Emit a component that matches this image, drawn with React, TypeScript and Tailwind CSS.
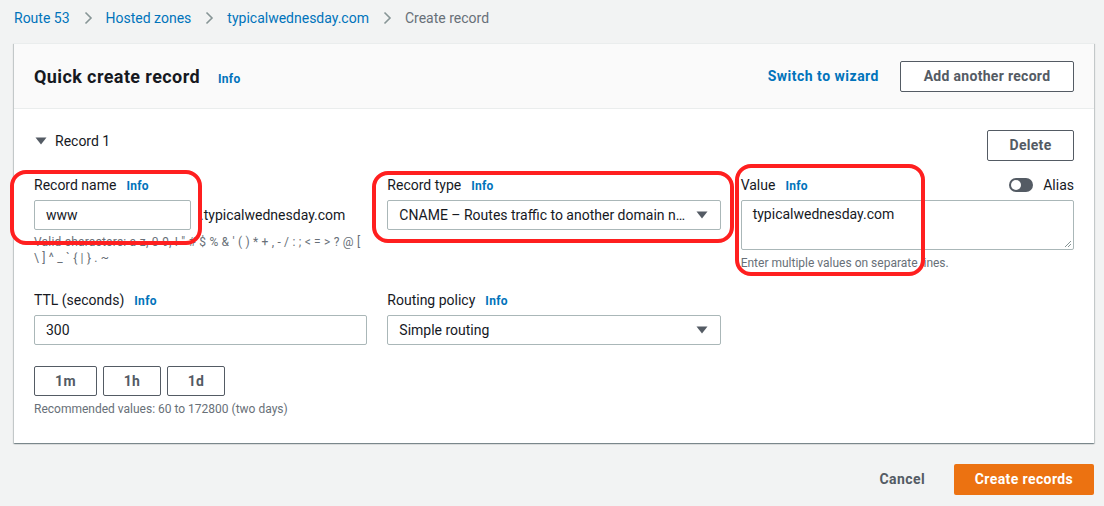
import React from 'react';

const font = { fontFamily: 'Roboto, "Liberation Sans", sans-serif' };

const Chevron: React.FC = () => (
  <svg width="16" height="16" viewBox="0 0 16 16" className="mx-[10px] text-[#879596]">
    <path d="M5.5 2.5 11 8l-5.5 5.5" fill="none" stroke="currentColor" strokeWidth="1.6" />
  </svg>
);

const Caret: React.FC<{ className?: string }> = ({ className }) => (
  <svg width="12" height="8" viewBox="0 0 12 8" className={className}>
    <path d="M0.5 0.5h11L6 7.5z" fill="#545b64" />
  </svg>
);

const Info: React.FC<{ className?: string }> = ({ className = 'ml-[10px]' }) => (
  <span className={`text-[12px] font-bold tracking-[0.3px] text-[#0073bb] ${className}`}>Info</span>
);

const Label: React.FC<{ text: string }> = ({ text }) => (
  <div className="flex items-baseline h-[22px] leading-[22px] text-[14px] text-[#16191f]">
    {text}
    <Info />
  </div>
);

const Select: React.FC<{ value: string }> = ({ value }) => (
  <div className="mt-1 h-[30px] flex items-center justify-between border border-[#aab7b8] rounded-[2px] bg-white pl-[11px] pr-[12px] text-[14px] text-[#16191f]">
    <span className="truncate pr-2">{value}</span>
    <Caret className="shrink-0" />
  </div>
);

const OutlineButton: React.FC<{ children: React.ReactNode; className?: string }> = ({ children, className = '' }) => (
  <button className={`h-[31px] border border-[#545b64] rounded-[2px] bg-white text-[14px] font-bold tracking-[0.3px] text-[#545b64] ${className}`}>
    {children}
  </button>
);

export default function App() {
  return (
    <div style={font} className="relative w-[1104px] h-[506px] bg-[#f2f3f3] pl-[14px] pr-[10px] overflow-hidden text-[#16191f]">
      {/* breadcrumb */}
      <nav className="h-[43px] flex items-center pb-[7px] text-[14px]">
        <span className="text-[#0073bb]">Route 53</span>
        <Chevron />
        <span className="text-[#0073bb]">Hosted zones</span>
        <Chevron />
        <span className="text-[#0073bb]">typicalwednesday.com</span>
        <Chevron />
        <span className="text-[#687078]">Create record</span>
      </nav>

      {/* panel */}
      <div className="w-[1080px] h-[400px] bg-white border-t border-[#eaeded] shadow-[0_1px_1px_0_rgba(0,28,36,0.3),1px_1px_1px_0_rgba(0,28,36,0.15),-1px_1px_1px_0_rgba(0,28,36,0.15)]">
        <div className="h-[65px] bg-[#fafafa] border-b border-[#eaeded] px-5 flex items-center justify-between">
          <div className="flex items-baseline">
            <h2 className="text-[18px] font-bold tracking-[0.4px] text-[#16191f]">Quick create record</h2>
            <Info className="ml-[18px]" />
          </div>
          <div className="flex items-center">
            <span className="text-[14px] font-bold tracking-[0.5px] text-[#0073bb] mr-[21px]">Switch to wizard</span>
            <OutlineButton className="w-[174px]">Add another record</OutlineButton>
          </div>
        </div>

        <div className="px-5 pt-[21px]">
          <div className="flex items-start justify-between">
            <div className="flex items-center h-[22px] leading-[22px] text-[14px]">
              <Caret className="ml-[1px] mr-[8px]" />
              Record 1
            </div>
            <OutlineButton className="w-[87px]">Delete</OutlineButton>
          </div>

          <div className="grid grid-cols-3 gap-x-5 mt-[13px]">
            {/* record name */}
            <div>
              <Label text="Record name" />
              <div className="mt-1 flex items-center">
                <div className="w-[157px] h-[30px] flex items-center border border-[#aab7b8] rounded-[2px] pl-[11px] text-[14px]">www</div>
                <span className="ml-[9px] text-[14px]">.typicalwednesday.com</span>
              </div>
              <p className="mt-1 text-[12px] leading-[16px] tracking-[0.2px] text-[#687078]">
                Valid characters: a-z, 0-9, ! " # $ % &amp; ' ( ) * + , - / : ; &lt; = &gt; ? @ [
                <br />
                \ ] ^ _ ` {'{'} | {'}'} . ~
              </p>
            </div>

            {/* record type */}
            <div>
              <Label text="Record type" />
              <Select value="CNAME – Routes traffic to another domain n…" />
            </div>

            {/* value */}
            <div>
              <div className="flex items-center justify-between">
                <Label text="Value" />
                <div className="flex items-center">
                  <div className="w-[24px] h-[14px] rounded-full bg-[#545b64] flex items-center px-[2px]">
                    <div className="w-[10px] h-[10px] rounded-full bg-white" />
                  </div>
                  <span className="ml-[10px] text-[14px]">Alias</span>
                </div>
              </div>
              <div className="relative mt-1 h-[50px] border border-[#aab7b8] rounded-[2px] pl-[11px] pt-[3px] text-[14px]">
                typicalwednesday.com
                <svg width="8" height="8" viewBox="0 0 8 8" className="absolute right-[1px] bottom-[1px]">
                  <path d="M7 1 1 7M7 4 4 7" stroke="#879596" strokeWidth="1" />
                </svg>
              </div>
              <p className="mt-[5px] text-[12px] leading-[16px] text-[#687078]">Enter multiple values on separate lines.</p>
            </div>

            {/* ttl */}
            <div className="mt-[18px]">
              <Label text="TTL (seconds)" />
              <div className="mt-1 h-[30px] flex items-center border border-[#aab7b8] rounded-[2px] pl-[11px] text-[14px]">300</div>
              <div className="mt-[21px] flex gap-[6px]">
                <OutlineButton className="w-[63px] !h-[30px]">1m</OutlineButton>
                <OutlineButton className="w-[58px] !h-[30px]">1h</OutlineButton>
                <OutlineButton className="w-[58px] !h-[30px]">1d</OutlineButton>
              </div>
              <p className="mt-[5px] text-[12px] leading-[16px] text-[#687078]">Recommended values: 60 to 172800 (two days)</p>
            </div>

            {/* routing */}
            <div className="mt-[18px]">
              <Label text="Routing policy" />
              <Select value="Simple routing" />
            </div>
          </div>
        </div>
      </div>

      {/* footer */}
      <div className="mt-[20px] pt-[1px] flex items-center justify-end">
        <span className="text-[14px] font-bold tracking-[0.4px] text-[#545b64] mr-[29px]">Cancel</span>
        <button className="w-[140px] h-[31px] rounded-[2px] bg-[#ec7211] text-white text-[14px] font-bold tracking-[0.4px]">Create records</button>
      </div>

      {/* annotation rings */}
      <div className="absolute left-[10px] top-[170px] w-[192px] h-[75px] border-4 border-[#ff1f1f] rounded-[16px]" />
      <div className="absolute left-[372px] top-[171px] w-[362px] h-[72px] border-4 border-[#ff1f1f] rounded-[16px]" />
      <div className="absolute left-[735px] top-[164px] w-[190px] h-[112px] border-4 border-[#ff1f1f] rounded-[16px]" />
    </div>
  );
}
